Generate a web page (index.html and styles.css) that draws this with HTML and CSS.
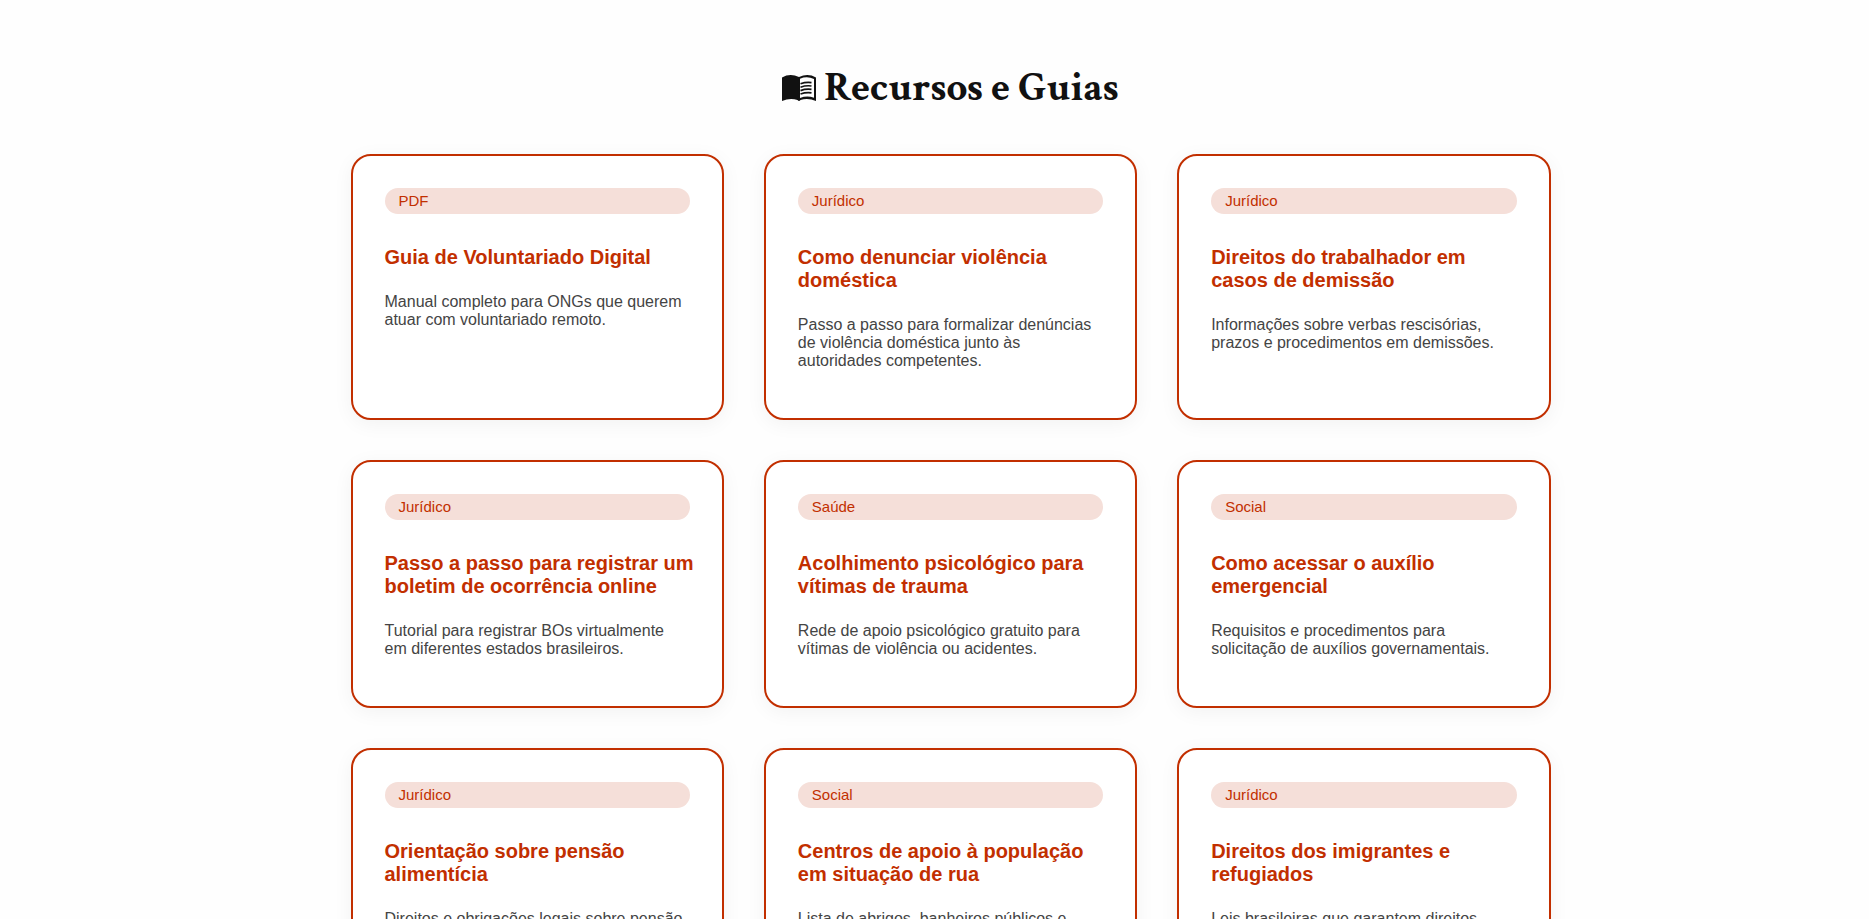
FILE: index.html
```html
<!DOCTYPE html>
<html lang="pt-BR">
<head>
<meta charset="utf-8">
<title>Recursos e Guias</title>
<link rel="stylesheet" href="styles.css">
</head>
<body>
<main class="resources">
  <h1 class="resources-title">
    <svg class="book-icon" viewBox="0 0 34 26" aria-hidden="true">
      <path fill="currentColor" d="M0 2.500Q8-2 17 2Q26-2 34 2.500V26Q26 22.500 18.500 25Q17 27 15.500 25Q8 22.500 0 26Z"/>
      <path fill="#fefefe" d="M18 3.800Q25 .8 32 4V22.700Q25 20.300 18 23Z"/>
      <path fill="none" stroke="currentColor" stroke-width="1.700" d="M18.500 8.800Q24 6.800 29.500 7.600M18.500 12.200Q24 10.200 29.500 11M18.500 15.600Q24 13.600 29.500 14.400M18.500 19Q24 17 29.500 17.800"/>
    </svg>
    <span>Recursos e Guias</span>
  </h1>
  <section class="card-grid">
    <article class="card">
      <span class="tag">PDF</span>
      <h2 class="card-title">Guia de Voluntariado Digital</h2>
      <p class="card-text">Manual completo para ONGs que querem atuar com voluntariado remoto.</p>
    </article>
    <article class="card">
      <span class="tag">Jurídico</span>
      <h2 class="card-title">Como denunciar violência doméstica</h2>
      <p class="card-text">Passo a passo para formalizar denúncias de violência doméstica junto às autoridades competentes.</p>
    </article>
    <article class="card">
      <span class="tag">Jurídico</span>
      <h2 class="card-title">Direitos do trabalhador em casos de demissão</h2>
      <p class="card-text">Informações sobre verbas rescisórias, prazos e procedimentos em demissões.</p>
    </article>
    <article class="card">
      <span class="tag">Jurídico</span>
      <h2 class="card-title card-title-long">Passo a passo para registrar um<br>boletim de ocorrência online</h2>
      <p class="card-text">Tutorial para registrar BOs virtualmente em diferentes estados brasileiros.</p>
    </article>
    <article class="card">
      <span class="tag">Saúde</span>
      <h2 class="card-title">Acolhimento psicológico para vítimas de trauma</h2>
      <p class="card-text">Rede de apoio psicológico gratuito para vítimas de violência ou acidentes.</p>
    </article>
    <article class="card">
      <span class="tag">Social</span>
      <h2 class="card-title">Como acessar o auxílio emergencial</h2>
      <p class="card-text">Requisitos e procedimentos para solicitação de auxílios governamentais.</p>
    </article>
    <article class="card">
      <span class="tag">Jurídico</span>
      <h2 class="card-title">Orientação sobre pensão alimentícia</h2>
      <p class="card-text">Direitos e obrigações legais sobre pensão</p>
    </article>
    <article class="card">
      <span class="tag">Social</span>
      <h2 class="card-title">Centros de apoio à população em situação de rua</h2>
      <p class="card-text">Lista de abrigos, banheiros públicos e</p>
    </article>
    <article class="card">
      <span class="tag">Jurídico</span>
      <h2 class="card-title">Direitos dos imigrantes e refugiados</h2>
      <p class="card-text">Leis brasileiras que garantem direitos</p>
    </article>
  </section>
</main>
</body>
</html>
```

FILE: styles.css
```css
* {
  box-sizing: border-box;
}

body {
  margin: 0;
  background: #fefefe;
  color: #111;
  font-family: "Liberation Sans", Arial, sans-serif;
}

.resources {
  padding: 64px 0 64px 32px;
}

.resources-title {
  display: flex;
  justify-content: center;
  align-items: center;
  gap: 8px;
  margin: 0 0 42px;
  font-family: "Crimson Text", "Liberation Serif", serif;
  font-size: 41px;
  line-height: 48px;
  font-weight: 700;
}

.book-icon {
  width: 34px;
  height: 26px;
}

.card-grid {
  display: grid;
  grid-template-columns: repeat(3, minmax(0, 1fr));
  gap: 40px;
  max-width: 1200px;
  margin: 0 auto;
}

.card {
  display: flex;
  flex-direction: column;
  padding: 32px;
  border: 2px solid #c22f00;
  border-radius: 20px;
  background: #fff;
  box-shadow: 0 4px 20px rgba(0, 0, 0, 0.05);
}

.tag {
  margin-bottom: 32px;
  padding: 4px 14px;
  border-radius: 16px;
  background: #f5dfd9;
  color: #c22f00;
  font-size: 15px;
  line-height: 18px;
}

.card-title {
  margin: 0 0 24px;
  color: #c22f00;
  font-size: 20px;
  line-height: 23px;
  font-weight: 700;
}

.card-title-long {
  white-space: nowrap;
}

.card-text {
  margin: 0 0 16px;
  color: #444;
  font-size: 16px;
  line-height: 18px;
}
```
